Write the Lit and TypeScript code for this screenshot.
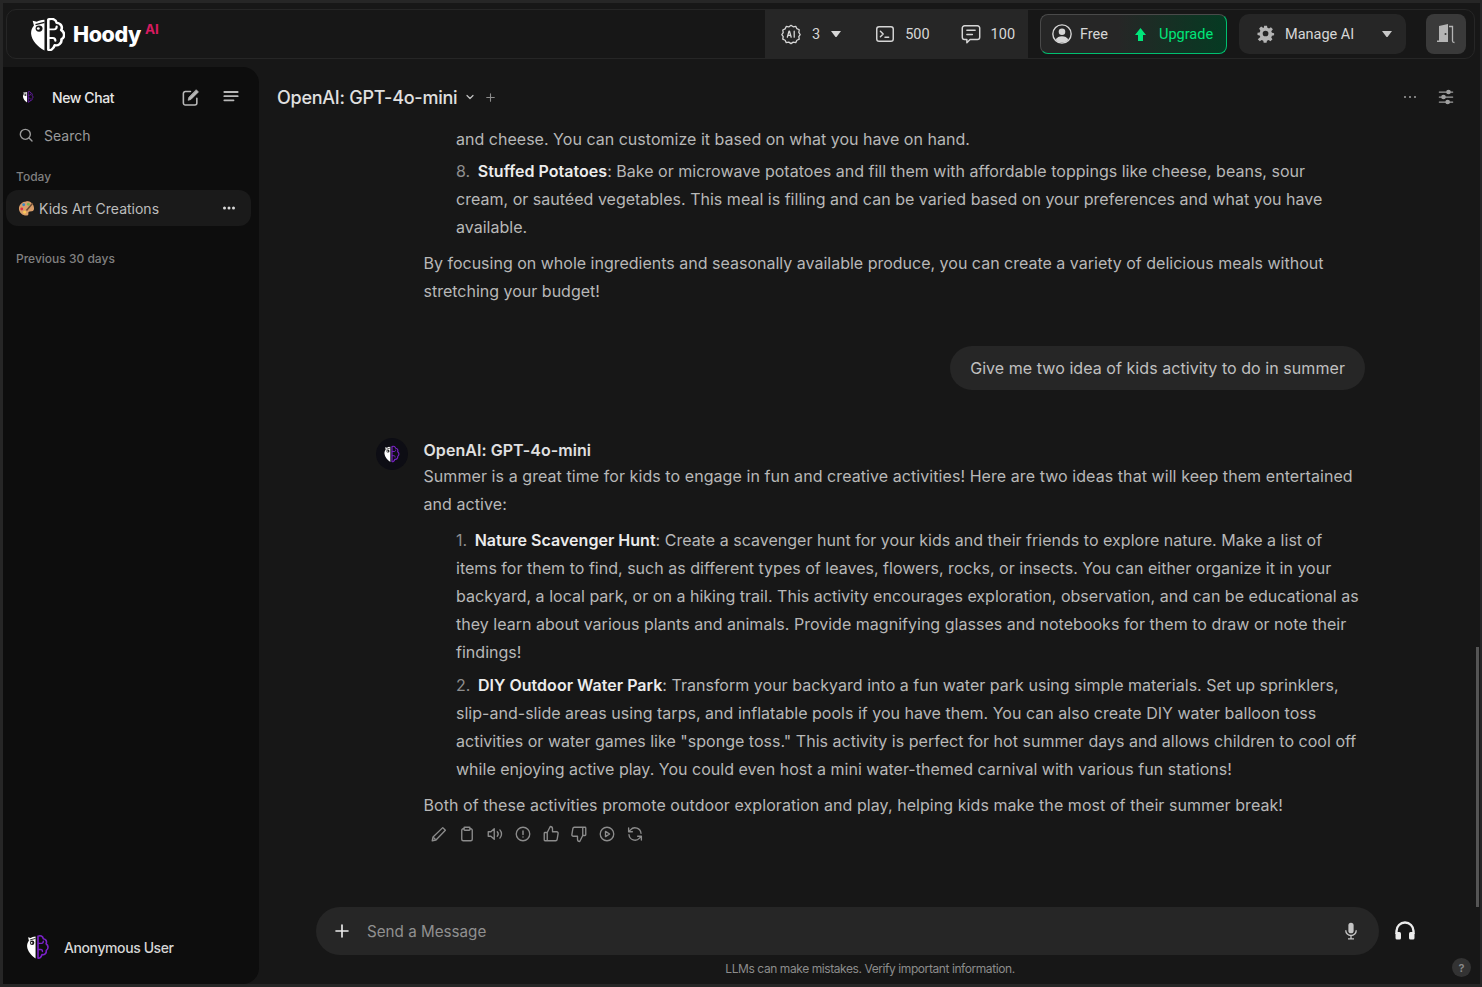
import { LitElement, html, css, svg } from "lit";
import { customElement } from "lit/decorators.js";

const mascot = (a: string, b: string) => svg`
  <path d="M12 3C9 3.300 7.500 3.800 6 4.800L2.800 4L3.800 8.200C2.200 10.400 1.400 12.800 1.600 15.500C2 21 6.600 26.800 12 30Z" fill="${a}"/>
  <circle cx="7.800" cy="10.800" r="2.700" fill="#171717"/><circle cx="7.200" cy="10.800" r="1.100" fill="${a}"/>
  <path d="M5 7.400L12 5.400" stroke="#171717" stroke-width="1.100"/>
  <path d="M15 2.800C17.800 1.200 21 2.800 21.500 5.800C24.800 6 26.400 9.400 25 12C28 14 28.200 18.400 25.200 20.200C25.800 23.800 22.600 26.200 20 25.300C19 28.800 16.600 30.400 15 29.500Z" fill="none" stroke="${b}" stroke-width="2" stroke-linejoin="round"/>
  <path d="M15.500 11.500H19.500C21 11.500 21.500 10.300 21.500 9M15.500 19H18.500C20 19 20.500 20 20.500 21.500" fill="none" stroke="${b}" stroke-width="1.700" stroke-linecap="round"/>`;

const I = (body: unknown, size = 18, sw = 2) => html`<svg class="ico" width=${size} height=${size} viewBox="0 0 24 24" fill="none" stroke="currentColor" stroke-width=${sw} stroke-linecap="round" stroke-linejoin="round">${body}</svg>`;

const caret = html`<svg width="12" height="8" viewBox="0 0 12 8"><path d="M1 1h10L6.500 7h-1z" fill="currentColor"/></svg>`;

@customElement("app-root")
export class AppRoot extends LitElement {
  static styles = css`
    :host { display: block; height: 987px; overflow: hidden; background: #171717; font-family: Inter, "Liberation Sans", sans-serif; color: #c4c4c4; }
    * { box-sizing: border-box; }
    svg { display: block; flex: none; }
    .frame { height: 987px; border: 3px solid #262626; border-right-width: 2px; display: flex; flex-direction: column; position: relative; background: #171717; overflow: hidden; }
    .top { height: 50px; margin: 6px 5px 0 3px; border: 1px solid #262626; border-radius: 10px; display: flex; align-items: center; flex: none; }
    .brand { display: flex; align-items: center; padding-left: 24px; flex: 1; }
    .brand b { font-size: 21.500px; font-weight: 800; color: #fff; margin-left: 8px; letter-spacing: -0.4px; }
    .brand sup { font-size: 13.500px; font-weight: 700; color: #d81b60; align-self: flex-start; margin: 3px 0 0 4px; line-height: 16px; }
    .stats { width: 263px; height: 49px; background: #262626; display: flex; align-items: center; padding-left: 15px; font-family: Roboto, sans-serif; font-size: 14.500px; color: #d6d6d6; margin-right: 12px; }
    .stat { display: flex; align-items: center; color: #d6d6d6; }
    .g1 { margin-left: 32px; }
    .g2 { margin-left: 30px; }
    .n3 { margin: 0 10px; }
    .n { margin-left: 9px; }
    .plan { width: 187px; height: 40px; border: 1px solid #4a4a4a; border-radius: 8px; display: flex; align-items: center; padding-left: 10px; font-family: Roboto, sans-serif; font-size: 14.500px; color: #d6d6d6; margin-right: 12px;
      background: linear-gradient(90deg, #262626 42%, #053a22 100%); border-color: #4a4a4a #00c070 #00c070 #4a4a4a; }
    .free { margin-left: 7px; flex: none; width: 54px; }
    .up { color: #00e67a; display: flex; align-items: center; }
    .upl { margin-left: 12px; }
    .manage { width: 167px; height: 40px; border-radius: 10px; background: #262626; display: flex; align-items: center; padding-left: 18px; font-family: Roboto, sans-serif; font-size: 14.500px; color: #d6d6d6; margin-right: 20px; }
    .ml { margin-left: 10px; flex: 1; }
    .mc { margin-right: 13px; color: #c8c8c8; display: flex; }
    .exit { width: 40px; height: 40px; border-radius: 8px; background: #3a3a3a; color: #b4b4b4; display: flex; align-items: center; justify-content: center; margin-right: 8px; }
    .body { flex: 1; display: flex; min-height: 0; margin-top: 8px; }
    .side { width: 256px; flex: none; background: #0d0d0d; border-radius: 0 16px 16px 0; display: flex; flex-direction: column; padding: 0 8px 0 3px; }
    .newchat { height: 60px; display: flex; align-items: center; padding-left: 12px; color: #e6e6e6; font-size: 14px; font-weight: 500; }
    .newchat .t { margin-left: 14px; flex: 1; letter-spacing: -0.4px; }
    .newchat .e { color: #b8b8b8; margin-right: 21px; }
    .newchat .m { color: #b8b8b8; margin-right: 10px; }
    .search { display: flex; align-items: center; padding-left: 12px; height: 20px; margin-top: -2px; font-size: 14px; color: #9b9b9b; gap: 10px; }
    .label { font-size: 12px; font-weight: 500; color: #808080; padding-left: 10px; }
    .today { margin-top: 23px; height: 18px; line-height: 18px; }
    .prev { margin-top: 24px; height: 18px; line-height: 18px; }
    .item { margin-top: 4px; height: 36px; border-radius: 12px; background: #1a1a1a; display: flex; align-items: center; padding: 0 15px 0 12px; font-size: 14px; color: #bdbdbd; gap: 4px; }
    .item .nm { flex: 1; }
    .user { margin-top: auto; height: 72px; display: flex; align-items: center; padding: 0 0 2px 19px; color: #d6d6d6; font-size: 14px; font-weight: 500; letter-spacing: -0.4px; gap: 13px; }
    .main { flex: 1; min-width: 0; display: flex; flex-direction: column; }
    .chead { height: 60px; flex: none; display: flex; align-items: center; padding: 0 24px 0 18px; color: #e0e0e0; }
    .chead .title { font-size: 18px; font-weight: 500; letter-spacing: -0.25px; }
    .chead .sp { flex: 1; }
    .chev { margin-left: 7px; color: #c4c4c4; }
    .pl { margin-left: 8px; color: #8c8c8c; }
    .sl { margin-left: 19px; color: #a0a0a0; }
    .scroll { flex: 1; min-height: 0; padding: 0 115px 0 164.500px; font-size: 16px; line-height: 28px; color: #b8b8b8; overflow: hidden; }
    .scroll p { margin: 0; }
    .scroll p.li { padding: 0 6px 0 32.500px; margin-bottom: 5.500px; letter-spacing: 0.02px; }
    .scroll p.first { margin-top: -2px; margin-bottom: 4px; }
    .li .num { color: #8e8e8e; margin-right: 3px; }
    .li b { color: #ececec; font-weight: 600; }
    .scroll p.after { margin-top: 8px; }
    .scroll p.wide { letter-spacing: 0.065px; }
    .scroll p.intro { letter-spacing: 0.07px; margin-bottom: 8px; }
    .upill { display: flex; justify-content: flex-end; margin: 40.500px 0 0; }
    .upill span { height: 44px; line-height: 44px; border-radius: 22px; background: #262626; padding: 0 20px; color: #c0c0c0; letter-spacing: 0.06px; }
    .msg { position: relative; margin-top: 47px; }
    .avatar { position: absolute; left: -47.500px; top: 1px; width: 32px; height: 32px; border-radius: 50%; background: #0d0d14; display: flex; align-items: center; justify-content: center; }
    .name { height: 25px; line-height: 26px; font-weight: 600; color: #e0e0e0; letter-spacing: 0.05px; }
    .acts { display: flex; gap: 10px; color: #8c8c8c; padding-left: 6.500px; margin-top: 6px; height: 18px; }
    .inputrow { flex: none; display: flex; align-items: center; padding-left: 57px; margin-top: auto; height: 48px; }
    .input { width: 1063px; height: 48px; border-radius: 24px; background: #262626; display: flex; align-items: center; padding: 0 19px 0 17px; color: #909090; font-size: 15.200px; }
    .input .plus { color: #ececec; margin-right: 16px; }
    .input .ph { flex: 1; }
    .input .mic { color: #c4c4c4; }
    .phones { color: #ececec; margin-left: 14px; }
    .note { flex: none; height: 29px; text-align: center; font-size: 12px; line-height: 27px; color: #8c8c8c; padding-left: 1px; letter-spacing: -0.42px; }
    .help { position: absolute; right: 9px; bottom: 7px; width: 19px; height: 19px; border-radius: 50%; background: #333; color: #8a8a8a; font-size: 11px; font-weight: 600; display: flex; align-items: center; justify-content: center; }
    .bar { position: absolute; right: 1px; top: 644px; width: 3px; height: 260px; background: #555; }
  `;

  render() {
    return html`<div class="frame">
      <div class="top">
        <div class="brand">
          <svg width="34" height="33" viewBox="1.500 1.500 26.500 29" preserveAspectRatio="none">${mascot("#fff", "#fff")}</svg>
          <b>Hoody</b><sup>AI</sup>
        </div>
        <div class="stats">
          <span class="stat">
            ${I(svg`<path d="M12 2.500l2.400 1.600 2.800-.5 1.200 2.600 2.600 1.200-.5 2.800L22 12.600l-1.500 2.200.5 2.800-2.600 1.200-1.200 2.600-2.800-.5L12 22.500l-2.400-1.600-2.800.5-1.200-2.600-2.600-1.200.5-2.800L2 12.600l1.500-2.200-.5-2.800 2.600-1.200 1.200-2.600 2.800.5z" stroke-width="1.400"/><path d="M8 15.500l1.800-6.500h.6l1.800 6.500M8.600 13.500h3M15.500 9v6.500" stroke-width="1.400"/>`, 22)}
            <span class="n3">3</span>${caret}
          </span>
          <span class="stat g1">
            ${I(svg`<rect x="3" y="4" width="18" height="16" rx="2.500" stroke-width="1.600"/><path d="M7 9l3 3-3 3M12 15.500h4" stroke-width="1.600"/>`, 22)}
            <span class="n">500</span>
          </span>
          <span class="stat g2">
            ${I(svg`<path d="M5 3h14a2.500 2.500 0 0 1 2.500 2.500v10A2.500 2.500 0 0 1 19 18h-8l-3.500 3.500V18H5a2.500 2.500 0 0 1-2.500-2.500v-10A2.500 2.500 0 0 1 5 3z" stroke-width="1.600"/><path d="M7.500 8h9M7.500 12.500h6" stroke-width="1.600"/>`, 22)}
            <span class="n">100</span>
          </span>
        </div>
        <div class="plan">
          ${I(svg`<circle cx="12" cy="12" r="10" stroke-width="1.500"/><circle cx="12" cy="9.500" r="3.600" fill="currentColor" stroke="none"/><path d="M5 18.500c1.500-3 4-4 7-4s5.500 1 7 4A10 10 0 0 1 5 18.500z" fill="currentColor" stroke="none"/>`, 22)}
          <span class="free">Free</span>
          <span class="up">
            <svg width="13" height="15" viewBox="0 0 13 15"><path d="M6.500 1L12 8H9v6H4V8H1z" fill="currentColor"/></svg>
            <span class="upl">Upgrade</span>
          </span>
        </div>
        <div class="manage">
          <svg width="18" height="18" viewBox="0 0 24 24" fill="#b4b4b4"><path fill-rule="evenodd" d="M10 2h4l.6 3 2.300 1 2.600-1.700 2.800 2.800L20 9.700l1 2.300 3 .6v3l-3 .6-1 2.300 1.700 2.600-2.800 2.800-2.600-1.700-2.300 1-.6 2.800h-4l-.6-2.800-2.300-1-2.600 1.700-2.800-2.800L4.700 18l-1-2.300-3-.6v-3l3-.6 1-2.300L3 6.100 5.800 3.300l2.600 1.700L9.700 5zM12 9a4 4 0 1 0 0 8 4 4 0 0 0 0-8z" transform="translate(0 -1) scale(.95)"/></svg>
          <span class="ml">Manage AI</span>
          <span class="mc">${caret}</span>
        </div>
        <div class="exit">
          <svg width="20" height="22" viewBox="0 0 20 22"><path d="M3 3l9-2v18H1v-1.500h2z" fill="currentColor"/><circle cx="9.500" cy="11" r="1" fill="#3a3a3a"/><path d="M13 3.500h3.500V18c0 1 .7 1.500 2 1.500" fill="none" stroke="currentColor" stroke-width="1.300"/></svg>
        </div>
      </div>
      <div class="body">
        <aside class="side">
          <div class="newchat">
            <svg width="20" height="20" viewBox="0 0 30 32"><g transform="translate(6 6) scale(.62)">${mascot("#fff", "#7b22c9")}</g></svg>
            <span class="t">New Chat</span>
            <span class="e">${I(svg`<path d="M20 13v6a2.500 2.500 0 0 1-2.500 2.500h-12A2.500 2.500 0 0 1 3 19V7a2.500 2.500 0 0 1 2.500-2.500H12" stroke-width="2"/><path d="M19.500 2.500l2.500 2.500-9.500 9.500L9 15.500l1-3.500z" fill="currentColor" stroke-width="1"/>`, 19)}</span>
            <span class="m">${I(svg`<path d="M4 6h16M4 11h16M4 16h11" stroke-width="2.200"/>`, 20)}</span>
          </div>
          <div class="search">
            ${I(svg`<circle cx="11" cy="11" r="7.500"/><path d="M17 17l4 4"/>`, 16, 2.100)}
            <span>Search</span>
          </div>
          <div class="label today">Today</div>
          <div class="item">
            <svg width="17" height="17" viewBox="0 0 18 18"><path d="M9 1.500C4.300 1.500 1 5 1 9c0 4.400 3.600 7.500 8 7.500 1.500 0 2.200-.8 2-2-.2-1.300 0-2.200 1.500-2.400l2.300-.2c1.500-.2 2.200-1.300 2.200-2.900 0-4.500-3.500-8-8-8z" fill="#d99e6a"/><circle cx="6" cy="5" r="1.500" fill="#3b88c3"/><circle cx="4" cy="9.500" r="1.500" fill="#dd2e44"/><circle cx="11" cy="4.500" r="1.500" fill="#77b255"/><circle cx="7" cy="13" r="1.500" fill="#fdcb58"/><path d="M15.500 3.500L9 11" stroke="#6a4a33" stroke-width="1.600"/></svg>
            <span class="nm">Kids Art Creations</span>
            <svg width="14" height="4" viewBox="0 0 14 4" fill="#d8d8d8"><circle cx="2.500" cy="2" r="1.500"/><circle cx="7" cy="2" r="1.500"/><circle cx="11.500" cy="2" r="1.500"/></svg>
          </div>
          <div class="label prev">Previous 30 days</div>
          <div class="user">
            <svg width="26" height="26" viewBox="0 0 30 32">${mascot("#fff", "#7b22c9")}</svg>
            <span>Anonymous User</span>
          </div>
        </aside>
        <main class="main">
          <div class="chead">
            <span class="title">OpenAI: GPT-4o-mini</span>
            <span class="chev">${I(svg`<path d="M6 9l6 6 6-6" stroke-width="2.400"/>`, 12)}</span>
            <span class="pl">${I(svg`<path d="M12 5v14M5 12h14"/>`, 13)}</span>
            <span class="sp"></span>
            <svg width="14" height="4" viewBox="0 0 14 4" fill="#a0a0a0"><circle cx="2" cy="2" r="1"/><circle cx="7" cy="2" r="1"/><circle cx="12" cy="2" r="1"/></svg>
            <span class="sl">${I(svg`<path d="M4 6h16M4 12h16M4 18h16" stroke-width="1.500"/><circle cx="15" cy="6" r="1.800" fill="currentColor"/><circle cx="9" cy="12" r="1.800" fill="currentColor"/><circle cx="14" cy="18" r="1.800" fill="currentColor"/>`, 20)}</span>
          </div>
          <div class="scroll">
            <p class="li first">and cheese. You can customize it based on what you have on hand.</p>
            <p class="li"><span class="num">8.</span> <b>Stuffed Potatoes</b>: Bake or microwave potatoes and fill them with affordable toppings like cheese, beans, sour cream, or sautéed vegetables. This meal is filling and can be varied based on your preferences and what you have available.</p>
            <p class="after">By focusing on whole ingredients and seasonally available produce, you can create a variety of delicious meals without stretching your budget!</p>
            <div class="upill"><span>Give me two idea of kids activity to do in summer</span></div>
            <div class="msg">
              <div class="avatar"><svg width="18" height="18" viewBox="0 0 30 32">${mascot("#fff", "#7b22c9")}</svg></div>
              <div class="name">OpenAI: GPT-4o-mini</div>
              <p class="intro">Summer is a great time for kids to engage in fun and creative activities! Here are two ideas that will keep them entertained and active:</p>
              <p class="li"><span class="num">1.</span> <b>Nature Scavenger Hunt</b>: Create a scavenger hunt for your kids and their friends to explore nature. Make a list of items for them to find, such as different types of leaves, flowers, rocks, or insects. You can either organize it in your backyard, a local park, or on a hiking trail. This activity encourages exploration, observation, and can be educational as they learn about various plants and animals. Provide magnifying glasses and notebooks for them to draw or note their findings!</p>
              <p class="li"><span class="num">2.</span> <b>DIY Outdoor Water Park</b>: Transform your backyard into a fun water park using simple materials. Set up sprinklers, slip-and-slide areas using tarps, and inflatable pools if you have them. You can also create DIY water balloon toss activities or water games like "sponge toss." This activity is perfect for hot summer days and allows children to cool off while enjoying active play. You could even host a mini water-themed carnival with various fun stations!</p>
              <p class="after wide">Both of these activities promote outdoor exploration and play, helping kids make the most of their summer break!</p>
              <div class="acts">
                ${I(svg`<path d="M17 3.500l3.500 3.500L8 20l-5 1 1-5z" stroke-width="1.800"/><path d="M7 19l-2-2" stroke-width="1.800"/>`)}
                ${I(svg`<path d="M8 5H7a2 2 0 0 0-2 2v12a2 2 0 0 0 2 2h10a2 2 0 0 0 2-2V7a2 2 0 0 0-2-2h-1" stroke-width="1.800"/><rect x="8" y="3" width="8" height="4" rx="1" stroke-width="1.800"/>`)}
                ${I(svg`<path d="M11 5L6.500 9H3v6h3.500l4.500 4z" stroke-width="1.800"/><path d="M15 9a4.500 4.500 0 0 1 0 6M18.500 6.500a8 8 0 0 1 0 11" stroke-width="1.800"/>`)}
                ${I(svg`<circle cx="12" cy="12" r="9" stroke-width="1.800"/><path d="M12 8v4.500M12 16v.1" stroke-width="2"/>`)}
                ${I(svg`<path d="M7 10v11H4a1 1 0 0 1-1-1v-9a1 1 0 0 1 1-1zM7 10l4-8c1.700 0 3 1.300 3 3v4h5.500a2 2 0 0 1 2 2.300l-1.300 8a2 2 0 0 1-2 1.700H7" stroke-width="1.800"/>`)}
                ${I(svg`<path d="M17 14V3h3a1 1 0 0 1 1 1v9a1 1 0 0 1-1 1zM17 14l-4 8c-1.700 0-3-1.300-3-3v-4H4.500a2 2 0 0 1-2-2.300l1.300-8a2 2 0 0 1 2-1.700H17" stroke-width="1.800"/>`)}
                ${I(svg`<circle cx="12" cy="12" r="9" stroke-width="1.800"/><path d="M10 8.500l5.500 3.500-5.500 3.500z" stroke-width="1.800"/>`)}
                ${I(svg`<path d="M20 11A8 8 0 0 0 6 6.500L3.500 9M3.500 4v5h5M4 13a8 8 0 0 0 14 4.500l2.500-2.500M20.500 20v-5h-5" stroke-width="1.800"/>`)}
              </div>
            </div>
          </div>
          <div class="inputrow">
            <div class="input">
              <span class="plus">${I(svg`<path d="M12 4v16M4 12h16"/>`, 18, 2.200)}</span>
              <span class="ph">Send a Message</span>
              <span class="mic"><svg width="18" height="20" viewBox="0 0 24 24" fill="currentColor"><rect x="8.500" y="1" width="7" height="14" rx="3.500"/><path d="M5 11a7 7 0 0 0 14 0M12 18v4M8 22.500h8" fill="none" stroke="currentColor" stroke-width="1.800"/></svg></span>
            </div>
            <span class="phones"><svg width="24" height="24" viewBox="0 0 24 24" fill="currentColor"><path d="M3.500 15v-3a8.500 8.500 0 0 1 17 0v3" fill="none" stroke="currentColor" stroke-width="2.400"/><rect x="2.500" y="13" width="5.500" height="7.500" rx="1.500"/><rect x="16" y="13" width="5.500" height="7.500" rx="1.500"/></svg></span>
          </div>
          <div class="note">LLMs can make mistakes. Verify important information.</div>
        </main>
      </div>
      <div class="bar"></div>
      <div class="help">?</div>
    </div>`;
  }
}
